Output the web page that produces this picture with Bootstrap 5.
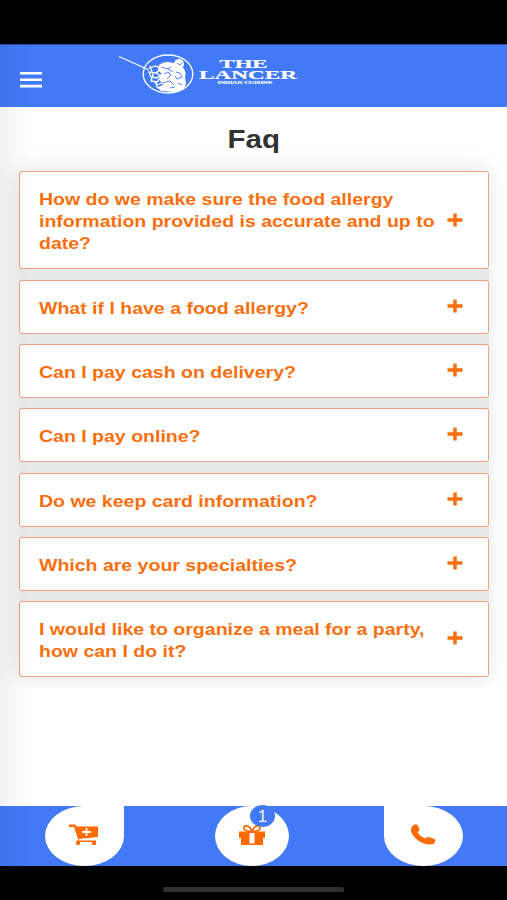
<!DOCTYPE html>
<html lang="en">
<head>
<meta charset="utf-8">
<meta name="viewport" content="width=device-width, initial-scale=1">
<title>Faq - The Lancer</title>
<link rel="stylesheet" href="https://cdn.jsdelivr.net/npm/bootstrap@5.3.0/dist/css/bootstrap.min.css">
<style>
:root { --brand: #4179f6; --accent: #f96f0e; }
body { font-family: "Liberation Sans", Arial, sans-serif; height: 900px; overflow: hidden; background: #000; }
.app { height: 822px; margin-top: 44px; background: #fff; position: relative; }
.app::after { content: ""; position: absolute; inset: 0 auto 0 0; width: 32px; pointer-events: none;
  background: linear-gradient(to right, rgba(0,0,0,.06), rgba(0,0,0,.02) 50%, transparent); }
.topbar { height: 63px; background: var(--brand); border-top: 1px solid #294c9b; }
.menu-btn { width: 22px; height: 16px; margin: 27px 0 0 20px; }
.brand-logo { width: 184px; height: 46px; margin: 8px 0 0 76px; }
.faq-section { height: 581px; overflow: hidden; padding: 17px 18.5px 0 19px; }
.faq-title { font-size: 25px; line-height: 30px; height: 47.4px; color: #303234; transform: scaleX(1.18); }
.faq-list { gap: 10.2px; background: #e8e9e9; box-shadow: -3px 0 26px rgba(0,0,0,.12); border-radius: 3px; }
.faq-item { border: 1.5px solid #f0a07c; border-radius: 3px; background: #fff; padding: 16px 25px 14.1px 18.5px; color: var(--accent); }
.faq-item svg { margin-top: -3.5px; }
.faq-text { font-size: 16px; line-height: 22px; font-weight: 700; white-space: nowrap; transform: translateY(.6px) scaleX(1.219); transform-origin: 0 50%; }
.bottombar { height: 60px; background: var(--brand); padding: 0 44px 0 44.5px; }
.tab-btn { width: 79.5px; height: 60px; background: #fff; border-radius: 50%; }
.tab-start { border-top-right-radius: 0; }
.tab-mid { width: 73.5px; position: relative; margin-right: 4px; }
.tab-end { border-top-left-radius: 0; }
.tab-btn svg { margin-top: -3px; }
.count { position: absolute; left: 35px; top: -1px; width: 25px; height: 22px; border-radius: 50%; background: var(--brand); font-size: 16px; line-height: 23px; }
.home-line { width: 181px; height: 5px; border-radius: 3px; background: #303030; margin: 21px auto 0; }
</style>
<script src="https://cdn.jsdelivr.net/npm/bootstrap@5.3.0/dist/js/bootstrap.bundle.min.js"></script>
</head>
<body>
<div class="app d-flex flex-column">
  <header class="topbar d-flex align-items-start flex-shrink-0">
    <svg class="menu-btn" viewBox="0 0 22 16" fill="#fff"><path d="M0 0h22v2.600H0zM0 6.400h22V9H0zM0 12.800h22v2.600H0z"/></svg>
    <svg class="brand-logo" viewBox="0 0 184 46" fill="none" stroke="#fff">
      <path d="M1 3.500L31 17" stroke-width="1.300"/>
      <ellipse cx="50" cy="21" rx="24.800" ry="19" stroke-width="1.300"/>
      <g fill="#fff" stroke="none">
        <circle cx="61" cy="11" r="5"/>
        <path d="M41 12q6-5 14-2l9 3q5 6 3 11l1 6-2 6-9 3-14-1-3-4 5-2-4-6 3-5-4-4z"/>
      </g>
      <path d="M31 15l7-2 5 3-5 4-7-1 2 5 6 1 5-4M32 13l3 9-2 6 6 1 4-5-5-5M36 28l3 4 5-2M38 33l5 4 4-3" stroke-width="1.300"/>
      <path d="M59 10l3 2 2-2M44 14l5 2 4-2M46 21l4-2 3 3-4 4M50 16l5 3M58 19l4 1 2 4-5 2-2-3M44 30l8-2 4 4M60 30l4 2M52 35l5-1" stroke="#4179f6" stroke-width=".9"/>
      <g fill="#fff" stroke-width=".2" font-family="Liberation Serif, serif" font-weight="700">
        <text x="101.500" y="14.600" font-size="12" textLength="48" lengthAdjust="spacingAndGlyphs">THE</text>
        <text x="81" y="26" font-size="12.500" textLength="98" lengthAdjust="spacingAndGlyphs">LANCER</text>
        <text x="99.500" y="31.300" font-size="5" stroke-width=".15" textLength="55" lengthAdjust="spacingAndGlyphs">INDIAN CUISINE</text>
      </g>
    </svg>
  </header>
  <main class="faq-section flex-shrink-0">
    <h1 class="faq-title fw-bold text-center mb-0">Faq</h1>
    <div class="faq-list d-flex flex-column">
      <div class="faq-item d-flex align-items-center justify-content-between"><div class="faq-text">How do we make sure the food allergy<br>information provided is accurate and up to<br>date?</div><svg width="16" height="14" viewBox="0 0 16 14"><path d="M8 .5v13M.5 7h15" stroke="currentColor" stroke-width="3.500"/></svg></div>
      <div class="faq-item d-flex align-items-center justify-content-between"><div class="faq-text">What if I have a food allergy?</div><svg width="16" height="14" viewBox="0 0 16 14"><path d="M8 .5v13M.5 7h15" stroke="currentColor" stroke-width="3.500"/></svg></div>
      <div class="faq-item d-flex align-items-center justify-content-between"><div class="faq-text">Can I pay cash on delivery?</div><svg width="16" height="14" viewBox="0 0 16 14"><path d="M8 .5v13M.5 7h15" stroke="currentColor" stroke-width="3.500"/></svg></div>
      <div class="faq-item d-flex align-items-center justify-content-between"><div class="faq-text">Can I pay online?</div><svg width="16" height="14" viewBox="0 0 16 14"><path d="M8 .5v13M.5 7h15" stroke="currentColor" stroke-width="3.500"/></svg></div>
      <div class="faq-item d-flex align-items-center justify-content-between"><div class="faq-text">Do we keep card information?</div><svg width="16" height="14" viewBox="0 0 16 14"><path d="M8 .5v13M.5 7h15" stroke="currentColor" stroke-width="3.500"/></svg></div>
      <div class="faq-item d-flex align-items-center justify-content-between"><div class="faq-text">Which are your specialties?</div><svg width="16" height="14" viewBox="0 0 16 14"><path d="M8 .5v13M.5 7h15" stroke="currentColor" stroke-width="3.500"/></svg></div>
      <div class="faq-item d-flex align-items-center justify-content-between"><div class="faq-text">I would like to organize a meal for a party,<br>how can I do it?</div><svg width="16" height="14" viewBox="0 0 16 14"><path d="M8 .5v13M.5 7h15" stroke="currentColor" stroke-width="3.500"/></svg></div>
    </div>
  </main>
  <nav class="bottombar d-flex justify-content-between mt-auto flex-shrink-0">
    <div class="tab-btn tab-start d-flex align-items-center justify-content-center">
      <svg width="30" height="22" viewBox="0 0 30 22" fill="#ff6b00"><path d="M0 .5h6.500l1 2H29v10.500L9.500 15l.5 1.500h17V18H8l1-3L5 3H0z"/><circle cx="9" cy="19" r="2.200"/><circle cx="25" cy="19" r="2.200"/><path d="M17.500 4v8M13 8h9" stroke="#fff" stroke-width="1.800"/></svg>
    </div>
    <div class="tab-btn tab-mid d-flex align-items-center justify-content-center">
      <svg width="28" height="20" viewBox="0 0 28 20"><path fill="#ff6b00" d="M1 6.500h26V13h-2v7H3v-7H1z"/><path d="M14 6.500C11-1 6 0 6 3s4 3.500 8 3.500c4 0 8-.5 8-3.500s-5-4-8 3.500z" fill="#fff" stroke="#ff6b00" stroke-width="1.800"/><path d="M11.500 8h5v10.500h-5z" fill="#fff"/></svg>
      <span class="count text-white text-center">1</span>
    </div>
    <div class="tab-btn tab-end d-flex align-items-center justify-content-center">
      <svg width="25" height="21" viewBox="0 0 25 21" fill="#ff6b00"><path d="M2 1.500Q5-.5 6.500 1L8.500 5q.5 1.500-2 3 2.500 4.500 8 6.500 1.500-2 3.500-1.500l5.500 2q1.500.8.500 3-1 2.500-5 2.500C10 20.500 0 12.500 0 5.500Q0 2.500 2 1.500z"/></svg>
    </div>
  </nav>
</div>
<div class="home-line"></div>
</body>
</html>
